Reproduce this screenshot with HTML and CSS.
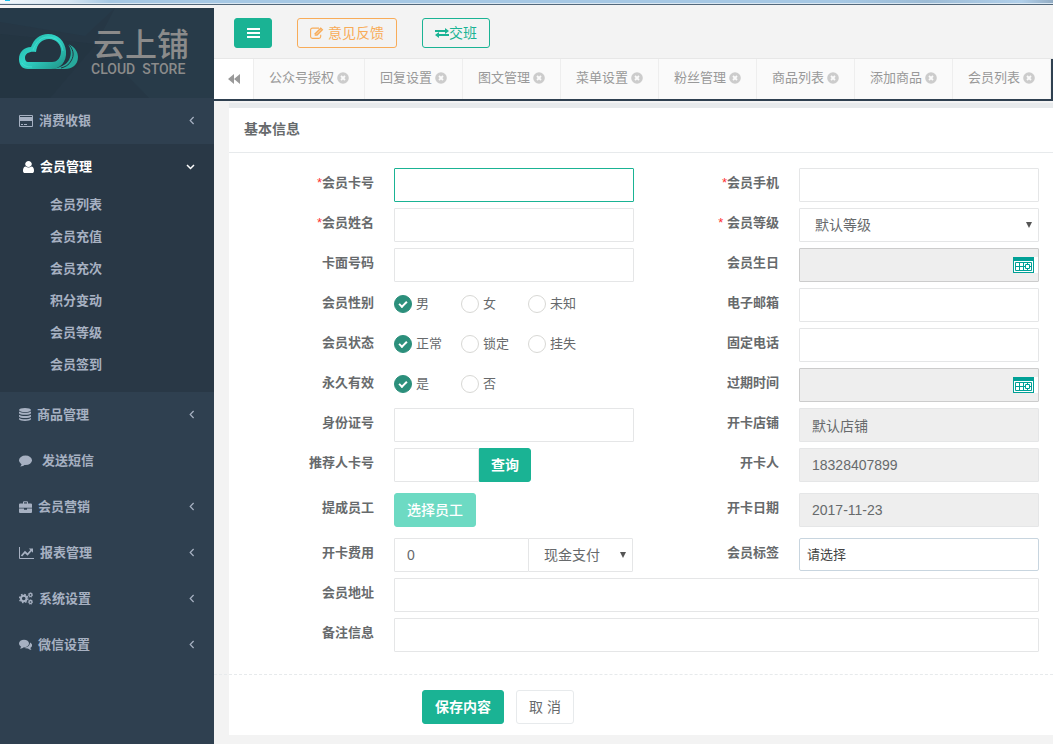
FILE: index.html
```html
<!DOCTYPE html>
<html lang="zh-CN">
<head>
<meta charset="utf-8">
<title>云上铺</title>
<link rel="stylesheet" href="styles.css">
</head>
<body>
<svg width="0" height="0" class="defs" aria-hidden="true">
  <symbol id="close" viewBox="0 0 12 12"><circle cx="6" cy="6" r="5.800" fill="#ccc"/><path d="M4 4l4 4M8 4L4 8" stroke="#fafafa" stroke-width="1.800"/></symbol>
  <symbol id="left" viewBox="0 0 6 9"><path d="M4.600 1L1.200 4.500l3.400 3.500" fill="none" stroke="currentColor" stroke-width="1.200"/></symbol>
  <symbol id="cal" viewBox="0 0 25 16"><path d="M0 0h25v16H0z" fill="#fff"/><path d="M0 0h21v16H0z" fill="#00a096"/><path d="M1 4h19v11H1z" fill="#fff"/><path d="M2.500 5.500h16v8h-16zM2.500 9.500h16M6.500 5.500v8M10.500 5.500v8M14.500 5.500v8" fill="none" stroke="#00a096"/><path d="M12.500 7.500h4v4h-4z" fill="#fff" stroke="#00a096"/></symbol>
  <symbol id="down" viewBox="0 0 6 6"><path d="M0 0h6L3 6z" fill="#555"/></symbol>
</svg>
<div class="strip"><i></i></div>
<div class="app">
  <nav class="side">
    <a class="brand" href="#">
      <svg class="facets" viewBox="0 0 214 90" preserveAspectRatio="none"><path d="M0 0h115L85 28 0 14z" fill="#263a49"/><path d="M115 0h99v90h-65L96 36z" fill="#283b49"/><path d="M0 26l96 10L50 90H0z" fill="#243542"/></svg>
      <svg class="cloud" width="60" height="36" viewBox="0 0 60 36">
        <defs><linearGradient id="g" x1="0" y1="0" x2="1" y2="1"><stop offset="0" stop-color="#25a99c"/><stop offset=".450" stop-color="#30d5c8"/><stop offset="1" stop-color="#1f8f84"/></linearGradient></defs>
        <path d="M49 10c7 3 10 8 10 13 0 8-6 12-13 12H32c9-1 15-4 18-9 3-6 2-11-1-16z" fill="#27a99c"/>
        <path d="M49 10c5 4 7 11 3 17-2 4-6 6-10 7" fill="none" stroke="#243542" stroke-width="1"/>
        <path d="M9 35C3 35 0 31 0 25c0-7 5-12 12-12C15 5 21 0 29 0c10 0 17 7 18 17 1 11-6 18-15 18zM9 28h24c6 0 9-5 9-11 0-7-5-12-12-12s-12 5-13 13c-6-1-11 1-11 6 0 2 1 4 3 4z" fill="url(#g)" fill-rule="evenodd"/>
        <path d="M3 29c2 3 5 4 10 4M14 16c3-8 8-13 15-13 8 0 14 6 15 14" fill="none" stroke="#4be3d6" stroke-width="1" opacity=".6"/>
      </svg>
      <span class="name"><b>云上铺</b><small>CLOUD  STORE</small></span>
    </a>
    <a class="item" href="#"><svg width="14" height="12"><path d="M.5.5h13v11H.5z" fill="none" stroke="currentColor"/><path d="M0 2h14v4H0z" fill="currentColor"/><path d="M2 9.500h2M5 9.500h3" stroke="currentColor"/></svg><span>消费收银</span><svg class="arrow" width="6" height="9"><use href="#left"/></svg></a>
    <div class="group">
      <a class="item" href="#"><svg width="11" height="12" viewBox="256 128 1280 1536" preserveAspectRatio="none"><path fill="currentColor" d="M1536 1399q0 109-62.500 187t-150.500 78H469q-88 0-150.500-78T256 1399q0-85 8.500-160.500t31.500-152 58.500-131 94-89T583 832q131 128 313 128t313-128q76 0 134.500 34.500t94 89 58.500 131 31.500 152 8.500 160.500zm-256-887q0 159-112.500 271.500T896 896 624.500 783.500 512 512t112.500-271.500T896 128t271.500 112.500T1280 512z"/></svg><span>会员管理</span><svg class="arrow" width="9" height="6"><path d="M1 1l3.500 3.500L8 1" fill="none" stroke="currentColor" stroke-width="1.500"/></svg></a>
      <ul class="sub">
        <li><a href="#">会员列表</a></li><li><a href="#">会员充值</a></li><li><a href="#">会员充次</a></li><li><a href="#">积分变动</a></li><li><a href="#">会员等级</a></li><li><a href="#">会员签到</a></li>
      </ul>
    </div>
    <a class="item" href="#"><svg width="12" height="13" fill="currentColor"><ellipse cx="6" cy="2" rx="6" ry="2"/><path d="M0 3.500c2 1.800 10 1.800 12 0v1.700c-1 2-11 2-12 0zM0 6.700c2 1.800 10 1.800 12 0v1.700c-1 2-11 2-12 0zM0 9.900c2 1.800 10 1.800 12 0v1.300c-1 2.300-11 2.300-12 0z"/></svg><span>商品管理</span><svg class="arrow" width="6" height="9"><use href="#left"/></svg></a>
    <a class="item spaced" href="#"><svg width="13" height="12" fill="currentColor"><ellipse cx="6.500" cy="5.300" rx="6.500" ry="4.800"/><path d="M2.500 8c.3 1.500-.4 2.700-1.300 3.500 2 0 3.800-.7 5-2.200z"/></svg><span>发送短信</span></a>
    <a class="item" href="#"><svg width="13" height="12"><path d="M4.500 3V.8h4V3" fill="none" stroke="currentColor"/><path d="M1 2.500h11q1 0 1 1V6.800H0V3.500q0-1 1-1zM0 7.500h5v1.200h3V7.500h5V11q0 1-1 1H1q-1 0-1-1z" fill="currentColor"/></svg><span>会员营销</span><svg class="arrow" width="6" height="9"><use href="#left"/></svg></a>
    <a class="item" href="#"><svg width="15" height="12"><path d="M.5 0v11.500H15" fill="none" stroke="currentColor"/><path d="M2.500 9l3.500-4 2.500 2.500L12.500 3" fill="none" stroke="currentColor" stroke-width="1.800"/><path d="M9.800 1.500H14v4.200z" fill="currentColor"/></svg><span>报表管理</span><svg class="arrow" width="6" height="9"><use href="#left"/></svg></a>
    <a class="item" href="#"><svg width="14" height="13" fill="none" stroke="currentColor"><circle cx="4.700" cy="6.500" r="2.800" stroke-width="2"/><circle cx="4.700" cy="6.500" r="4.200" stroke-width="1.300" stroke-dasharray="1.600 1.700"/><circle cx="11.500" cy="2.900" r="1.500" stroke-width="1.300"/><circle cx="11.500" cy="2.900" r="2.300" stroke-width=".700" stroke-dasharray="1 .800"/><circle cx="11.500" cy="10" r="1.500" stroke-width="1.300"/><circle cx="11.500" cy="10" r="2.300" stroke-width=".700" stroke-dasharray="1 .800"/></svg><span>系统设置</span><svg class="arrow" width="6" height="9"><use href="#left"/></svg></a>
    <a class="item" href="#"><svg width="13" height="12" fill="currentColor"><ellipse cx="5" cy="4.500" rx="5" ry="3.800"/><path d="M2 7c0 1.300-.4 2-1 2.700 1.600 0 3-.6 3.900-1.700zM11 3.500c3 1.400 2.500 4.300.5 5.300 0 1 .4 1.500 1 2-1.600 0-2.700-.5-3.500-1.300-1.600.1-3-.2-4-.8 3.500-.1 6-2.200 6-5.200z"/></svg><span>微信设置</span><svg class="arrow" width="6" height="9"><use href="#left"/></svg></a>
  </nav>
  <main class="main">
    <header class="top">
      <button class="btn primary menu" type="button" aria-label="菜单"><svg width="13" height="10"><path d="M0 1h13M0 5h13M0 9h13" stroke="#fff" stroke-width="2"/></svg></button>
      <button class="btn warn" type="button"><svg width="14" height="12" fill="none" stroke="currentColor"><path d="M9 1.100H2.500Q.6 1.100.6 3v6.500q0 1.900 1.900 1.900h6.300q1.900 0 1.900-1.900V7.800" stroke-width="1.100"/><path d="M4.700 8.700V6.200L10.700.3l2.600 2.500-6 5.900z" fill="currentColor" stroke="none"/><path d="M6 7.500l5-5" stroke="#f3f3f4" stroke-width=".700"/></svg><span>意见反馈</span></button>
      <button class="btn ok" type="button"><svg width="14" height="10" fill="currentColor"><path d="M0 2h10V0l4 3-4 3V4H0zM14 6H4V4L0 7l4 3V8h10z"/></svg><span>交班</span></button>
    </header>
    <nav class="tabs">
      <button class="back" type="button" aria-label="向左"><svg width="12" height="10"><path d="M6 0v10L0 5zM12 0v10L6 5z" fill="#999"/></svg></button>
      <a href="#">公众号授权<svg width="12" height="12"><use href="#close"/></svg></a>
      <a href="#">回复设置<svg width="12" height="12"><use href="#close"/></svg></a>
      <a href="#">图文管理<svg width="12" height="12"><use href="#close"/></svg></a>
      <a href="#">菜单设置<svg width="12" height="12"><use href="#close"/></svg></a>
      <a href="#">粉丝管理<svg width="12" height="12"><use href="#close"/></svg></a>
      <a href="#">商品列表<svg width="12" height="12"><use href="#close"/></svg></a>
      <a href="#">添加商品<svg width="12" height="12"><use href="#close"/></svg></a>
      <a href="#">会员列表<svg width="12" height="12"><use href="#close"/></svg></a>
      <span class="current"></span>
    </nav>
    <section class="card">
      <h1>基本信息</h1>
      <form>
        <div class="fields">
          <div class="field"><label for="f1"><em>*</em>会员卡号</label><input class="box active" id="f1" type="text"></div>
          <div class="field"><label for="f2"><em>*</em>会员手机</label><input class="box" id="f2" type="text"></div>
          <div class="field"><label for="f3"><em>*</em>会员姓名</label><input class="box" id="f3" type="text"></div>
          <div class="field"><label for="f4"><em>*</em> 会员等级</label><div class="pick"><select class="box" id="f4"><option>默认等级</option></select><svg width="6" height="6"><use href="#down"/></svg></div></div>
          <div class="field"><label for="f5">卡面号码</label><input class="box" id="f5" type="text"></div>
          <div class="field"><label for="f6">会员生日</label><div class="pick date"><input class="box" id="f6" type="text" readonly><svg width="25" height="16"><use href="#cal"/></svg></div></div>
          <div class="field" role="radiogroup" aria-labelledby="r1"><span class="label" id="r1">会员性别</span><div class="radios"><label><input type="radio" name="sex" checked>男</label><label><input type="radio" name="sex">女</label><label><input type="radio" name="sex">未知</label></div></div>
          <div class="field"><label for="f7">电子邮箱</label><input class="box" id="f7" type="text"></div>
          <div class="field" role="radiogroup" aria-labelledby="r2"><span class="label" id="r2">会员状态</span><div class="radios"><label><input type="radio" name="state" checked>正常</label><label><input type="radio" name="state">锁定</label><label><input type="radio" name="state">挂失</label></div></div>
          <div class="field"><label for="f8">固定电话</label><input class="box" id="f8" type="text"></div>
          <div class="field" role="radiogroup" aria-labelledby="r3"><span class="label" id="r3">永久有效</span><div class="radios"><label><input type="radio" name="forever" checked>是</label><label><input type="radio" name="forever">否</label></div></div>
          <div class="field"><label for="f9">过期时间</label><div class="pick date"><input class="box" id="f9" type="text" readonly><svg width="25" height="16"><use href="#cal"/></svg></div></div>
          <div class="field"><label for="f10">身份证号</label><input class="box" id="f10" type="text"></div>
          <div class="field"><label for="f11">开卡店铺</label><input class="box" id="f11" type="text" value="默认店铺" readonly></div>
          <div class="field tall"><label for="f12">推荐人卡号</label><div class="join"><input class="box ref" id="f12" type="text"><button class="btn primary find" type="button">查询</button></div></div>
          <div class="field tall"><label for="f13">开卡人</label><input class="box" id="f13" type="text" value="18328407899" readonly></div>
          <div class="field tall"><label for="f14">提成员工</label><div class="join"><button class="btn primary faded" id="f14" type="button">选择员工</button></div></div>
          <div class="field tall"><label for="f15">开卡日期</label><input class="box" id="f15" type="text" value="2017-11-23" readonly></div>
          <div class="field"><label for="f16">开卡费用</label><div class="join"><input class="box fee" id="f16" type="text" value="0"><div class="pick pay"><select class="box" aria-label="支付方式"><option>现金支付</option></select><svg width="6" height="6"><use href="#down"/></svg></div></div></div>
          <div class="field"><label for="f17">会员标签</label><select class="box tags" id="f17"><option>请选择</option></select></div>
          <div class="field wide"><label for="f18">会员地址</label><input class="box" id="f18" type="text"></div>
          <div class="field wide"><label for="f19">备注信息</label><input class="box" id="f19" type="text"></div>
        </div>
        <hr>
        <div class="actions"><button class="btn primary save" type="submit">保存内容</button><button class="btn plain" type="button">取 消</button></div>
      </form>
    </section>
  </main>
</div>
</body>
</html>
```
FILE: styles.css
```css
* { box-sizing: border-box; }
body {
  margin: 0;
  min-height: 100vh;
  display: flex;
  flex-direction: column;
  background: #f3f3f3;
  color: #676a6c;
  font: 13px/18px "Liberation Sans", "Noto Sans CJK SC", sans-serif;
}
a { color: inherit; text-decoration: none; }
button, input, select { font: inherit; color: inherit; margin: 0; }
svg { flex: none; }
.defs { position: absolute; }

.strip {
  height: 5px;
  border-bottom: 1px solid #52677a;
  background: linear-gradient(90deg, #f4f8fb, #d5e5f2 70px, #a6c8e4 110px, #a6c8e4 80%, #9dbcd6 88%, #b0cfea 97%, #94adc4);
  box-shadow: inset 0 -1px #dbe8f2;
}
.strip i { display: block; width: 5px; height: 1px; margin-left: 5px; background: #16c1ee; }

.app { flex: 1; display: flex; }

.side { flex: none; width: 214px; margin-top: 3px; background: #2f4050; color: #a7b1c2; font-weight: 700; }
.brand { position: relative; display: flex; height: 90px; padding: 20px 0 0 19px; background: #263745; color: #8b8b8b; }
.facets { position: absolute; inset: 0; width: 100%; height: 100%; }
.cloud { position: relative; margin-top: 6px; }
.name { position: relative; margin-left: 14px; }
.name b { display: block; font-size: 32px; line-height: 34px; font-weight: 500; }
.name small { display: block; margin-left: -2px; font: 500 14px/14px Roboto, "Liberation Sans", sans-serif; white-space: pre; }
.item { display: flex; align-items: center; height: 46px; padding: 0 19px 1px; }
.item span { margin-left: 6px; }
.item.spaced span { margin-left: 10px; }
.arrow { margin-left: auto; }
.group { background: #293846; padding-bottom: 10px; }
.group .item { padding-left: 23px; color: #fff; }
.sub { list-style: none; margin: 0; padding: 0; }
.sub a { display: block; height: 32px; padding: 6px 0 0 50px; }

.main { flex: 1; min-width: 0; }
.top { display: flex; height: 53px; padding: 13px 20px 0; align-items: flex-start; }
.btn {
  display: inline-flex;
  align-items: center;
  justify-content: center;
  height: 34px;
  padding: 0 12px;
  border: 1px solid transparent;
  border-radius: 3px;
  background: #fff;
  font-size: 14px;
  line-height: 18px;
  white-space: nowrap;
}
.primary { background: #1ab394; border-color: #1ab394; color: #fff; font-weight: 500; }
.top .btn { height: 30px; margin-right: 25px; background: transparent; }
.top .menu { width: 38px; padding: 0; background: #1ab394; }
.top .warn { border-color: #f8ac59; color: #f8ac59; }
.warn span { margin-left: 4px; }
.top .ok { border-color: #1ab394; color: #1ab394; }

.tabs { display: flex; height: 43px; border-top: 1px solid #e7e7e7; border-bottom: 2px solid #2f4050; overflow: hidden; background: #fafafa; color: #999; }
.tabs a, .back { flex: none; display: flex; align-items: center; border: 0; border-right: 1px solid #eee; }
.tabs a { gap: 3px; padding: 0 15px 2px; }
.back { width: 40px; padding: 0 0 0 14px; background: #fff; }
.current { flex: 1; background: #2f4050; }

.card { margin: 2px 0 0 15px; padding-bottom: 11px; border-top: 5px solid #e7eaec; background: #fff; }
.card h1 { margin: 0; height: 45px; padding: 12px 15px 0; border-bottom: 1px solid #e7eaec; font-size: 14px; line-height: 18px; font-weight: 700; }
.fields { display: grid; grid-template-columns: 1fr 1fr; row-gap: 6px; padding: 15px 14px 0 0; }
.field { display: grid; grid-template-columns: 145px 1fr; column-gap: 20px; align-items: start; min-height: 34px; }
.tall { min-height: 39px; }
.wide { grid-column: 1 / -1; }
.field > label, .label { padding-top: 6px; text-align: right; font-weight: 700; white-space: pre; }
.field em { color: #ff3030; font-style: normal; font-weight: 400; }
.box { width: 100%; min-width: 0; height: 34px; padding: 0 12px; border: 1px solid #e5e6e7; border-radius: 1px; background: #fff; font-size: 14px; outline: 0; appearance: none; }
.box.active { border-color: #1ab394; }
.box[readonly] { background: #eee; }
.pick { position: relative; }
.pick select { padding: 0 15px; }
.pick svg { position: absolute; right: 7px; top: 14px; }
.date .box { border-color: #ccc; }
.date svg { right: 1px; top: 9px; }
.box.tags { height: 33px; padding: 0 7px; border-color: #c8d5df; border-radius: 2px; color: #444; font-size: 13px; }
.join { display: flex; }
.ref { width: 85px; }
.find { padding: 0 11px; border-radius: 0 3px 3px 0; }
.find, .save { font-weight: 700; }
.faded { background: #6ddac3; border-color: #6ddac3; }
.fee { width: 135px; }
.pay { width: 105px; margin-left: -1px; }

.radios { display: flex; padding-top: 7px; }
.radios label { display: flex; align-items: center; gap: 4px; width: 67px; height: 18px; white-space: nowrap; }
.radios input { appearance: none; flex: none; display: grid; place-items: center; width: 18px; height: 18px; border: 1px solid #d8d8d5; border-radius: 50%; background: #fff; }
.radios input:checked { border-color: #2b8f7b; background: #2b8f7b; }
.radios input:checked::after { content: ""; box-sizing: border-box; width: 8px; height: 5px; margin-bottom: 2px; border: solid #fff; border-width: 0 0 2px 2px; transform: rotate(-45deg); }

hr { height: 0; margin: 22px 0 15px -15px; border: 0; border-top: 1px dashed #e7eaec; }
.actions { display: flex; gap: 12px; padding-left: 193px; }
.plain { border-color: #e7eaec; }
```
